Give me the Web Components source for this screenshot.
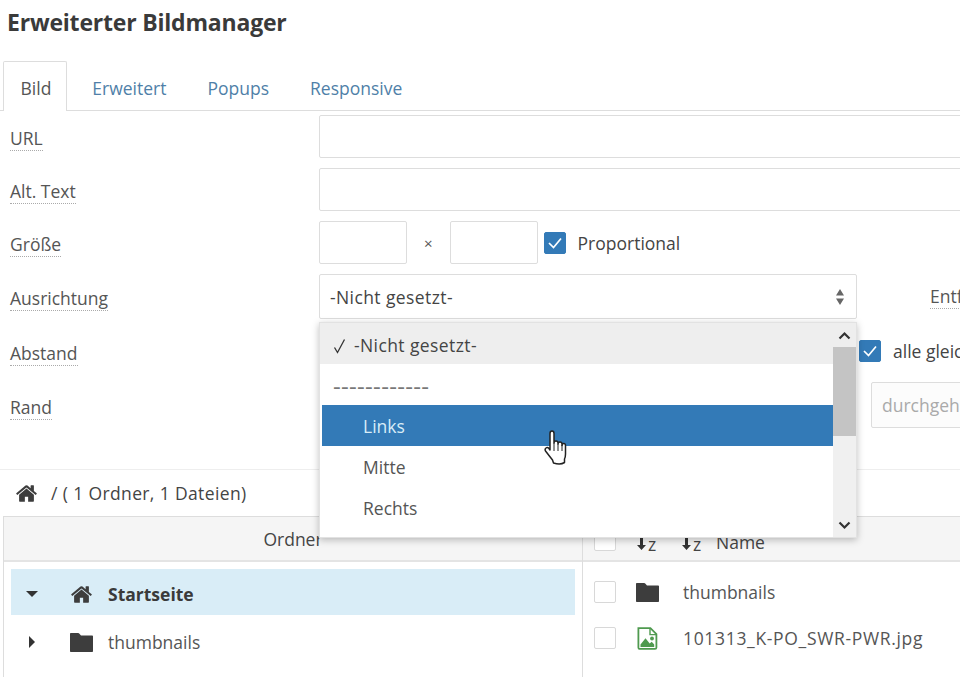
<!DOCTYPE html>
<html lang="de">
<head>
<meta charset="utf-8">
<title>Erweiterter Bildmanager</title>
<style>
  html, body { margin: 0; height: 100%; overflow: hidden; background: #fff; }
  body { font: 17.5px/24px "Open Sans", sans-serif; color: #444; width: 960px; height: 677px; position: relative; }
</style>
</head>
<body>
<bm-manager></bm-manager>

<script>
const ICONS = {
  home: `<svg viewBox="0 0 1792 1792" width="100%" height="100%"><path fill="currentColor" d="M1472 992v480q0 26-19 45t-45 19h-384v-384h-256v384h-384q-26 0-45-19t-19-45v-480q0-1 .5-3t.5-3l575-474 575 474q1 2 1 6zm223-69l-62 74q-8 9-21 11h-3q-13 0-21-7l-692-577-692 577q-12 8-24 7-13-2-21-11l-62-74q-8-10-7-23.5t11-21.5l719-599q32-26 76-26t76 26l244 204v-195q0-14 9-23t23-9h192q14 0 23 9t9 23v408l219 182q10 8 11 21.5t-7 23.5z"/></svg>`,
  folder: `<svg viewBox="0 0 23 20" width="100%" height="100%"><path fill="currentColor" d="M0 1.2Q0 .4.8.4h7.4q.6 0 1 .5L11 3h11.2q.8 0 .8.8v15q0 .8-.8.8H.8q-.8 0-.8-.8z"/></svg>`,
  image: `<svg viewBox="0 0 21 23" width="100%" height="100%"><path fill="none" stroke="#4f9a4f" stroke-width="1.8" d="M1.4 1.2h12l6 6v13.2q0 1.4-1.4 1.4H2.400q-1 0-1-1.4z"/><path fill="none" stroke="#4f9a4f" stroke-width="1.4" d="M13 1.2v6.400h6.400"/><circle cx="15" cy="11.500" r="1.900" fill="#4f9a4f"/><path fill="#4f9a4f" d="M3.500 20v-2.400l5-6.400 4.200 5.200 2-1.600 2.500 2.600V20z"/></svg>`
};

class BmTitle extends HTMLElement {
  constructor() {
    super();
    this.attachShadow({ mode: 'open' }).innerHTML = `
      <style>
        :host { display: block; padding: 7px 0 0 7px; height: 53px; box-sizing: border-box;
          font: bold 23px/30px "Open Sans", sans-serif; color: #3a3a3a; letter-spacing: -.2px; }
      </style><slot></slot>`;
  }
}

class BmTabs extends HTMLElement {
  constructor() {
    super();
    this.attachShadow({ mode: 'open' }).innerHTML = `
      <style>
        :host { display: flex; gap: 6px; height: 50px; box-sizing: border-box; padding-left: 3px;
          border-bottom: 1px solid #ddd; margin-top: 8px; }
      </style><slot></slot>`;
  }
}

class BmTab extends HTMLElement {
  constructor() {
    super();
    this.attachShadow({ mode: 'open' }).innerHTML = `
      <style>
        :host { display: block; height: 50px; box-sizing: border-box; padding: 14px 16.5px 0; border: 1px solid transparent;
          border-bottom: 0; line-height: 24px; color: #4f7fa8; }
        :host([active]) { border-color: #ddd; background: #fff; color: #555; border-radius: 2px 2px 0 0;
          padding-right: 14.5px; margin-right: 2px; }
      </style><slot></slot>`;
  }
}

class BmRow extends HTMLElement {
  constructor() {
    super();
    this.attachShadow({ mode: 'open' }).innerHTML = `
      <style>
        :host { display: flex; align-items: center; padding-left: 10px; min-height: 43px; margin-bottom: 10px; }
        .label { width: 309px; flex: none; padding-top: var(--label-drop, 2px); }
        .label span { border-bottom: 1px dotted #aaa; color: #555; }
        .field { display: flex; align-items: center; flex: 1; min-width: 0; }
      </style>
      <div class="label"><span><slot name="label"></slot></span></div>
      <div class="field"><slot></slot></div>`;
  }
}

class BmInput extends HTMLElement {
  constructor() {
    super();
    this.attachShadow({ mode: 'open' }).innerHTML = `
      <style>
        :host { display: flex; align-items: center; box-sizing: border-box; height: 43px; flex: none;
          border: 1px solid #ddd; border-radius: 2px; background: #fff; padding: 0 10px; color: #aaa; }
        :host([wide]) { width: 700px; }
        :host([small]) { width: 88px; }
      </style><slot></slot>`;
  }
}

class BmSelect extends HTMLElement {
  constructor() {
    super();
    this.attachShadow({ mode: 'open' }).innerHTML = `
      <style>
        :host { display: flex; align-items: center; justify-content: space-between; box-sizing: border-box;
          width: 538px; height: 45px; flex: none; padding: 0 12px 0 10px; border: 1px solid #ddd; border-radius: 2px; color: #444; letter-spacing: .4px; }
        svg { width: 8px; height: 16px; color: #666; }
      </style>
      <slot></slot>
      <svg viewBox="0 0 8 16"><path fill="currentColor" d="M4 0l4 6.500H0zM0 9.500h8L4 16z"/></svg>`;
  }
}

class BmCheck extends HTMLElement {
  constructor() {
    super();
    this.attachShadow({ mode: 'open' }).innerHTML = `
      <style>
        :host { display: inline-flex; align-items: center; gap: 12px; flex: none; }
        .box { box-sizing: border-box; width: 22px; height: 22px; border-radius: 2px; border: 1px solid #d8d8d8; background: #fff; display: block; }
        :host([checked]) .box { background: #337ab7; border-color: #337ab7; }
        svg { display: none; width: 20px; height: 20px; }
        :host([checked]) svg { display: block; }
      </style>
      <span class="box"><svg viewBox="0 0 20 20"><path fill="none" stroke="#fff" stroke-width="1.7" d="M4 10l4.500 4.500L16 5.500"/></svg></span>
      <slot></slot>`;
  }
}

class BmIcon extends HTMLElement {
  constructor() {
    super();
    this.attachShadow({ mode: 'open' });
  }
  connectedCallback() {
    this.shadowRoot.innerHTML = `
      <style>:host { display: block; flex: none; width: 23px; height: 23px; color: #3d3d3d; }</style>
      ${ICONS[this.getAttribute('name')]}`;
  }
}

class BmDropdown extends HTMLElement {
  constructor() {
    super();
    this.attachShadow({ mode: 'open' }).innerHTML = `
      <style>
        :host { position: absolute; left: 319px; top: 322px; width: 538px; height: 216px; box-sizing: border-box; display: flex;
          background: #fff; border: 1px solid #e2e2e2; box-shadow: 0 2px 7px rgba(0,0,0,.25); z-index: 5; }
        .list { flex: 1; min-width: 0; }
        .bar { width: 23px; flex: none; background: #f0f0f0; display: flex; flex-direction: column; }
        .btn { height: 24px; flex: none; display: flex; align-items: center; justify-content: center; }
        .btn svg { width: 13px; height: 9px; }
        .thumb { height: 89px; flex: none; background: #c4c4c4; }
        .rest { flex: 1; }
        .bar .btn.up { background: #eee; }
      </style>
      <div class="list"><slot></slot></div>
      <div class="bar">
        <div class="btn up"><svg viewBox="0 0 13 9"><path fill="none" stroke="#333" stroke-width="2.200" d="M1.500 7.500 6.500 2.500l5 5"/></svg></div>
        <div class="thumb"></div>
        <div class="rest"></div>
        <div class="btn"><svg viewBox="0 0 13 9"><path fill="none" stroke="#333" stroke-width="2.200" d="M1.500 1.500 6.500 6.500l5-5"/></svg></div>
      </div>`;
  }
}

class BmOption extends HTMLElement {
  constructor() {
    super();
    this.attachShadow({ mode: 'open' }).innerHTML = `
      <style>
        :host { display: flex; align-items: center; height: 41px; box-sizing: border-box; padding: 1px 0 0 41px; margin-left: 2px; color: #555; }
        :host([selected]) { background: #eee; margin-left: 0; padding: 3px 0 0 13px; color: #444; letter-spacing: .4px; }
        :host([divider]) { padding: 3px 0 0 11px; color: #777; font-size: 24px; letter-spacing: .3px; }
        :host([hover]) { background: #337ab7; color: #d9edf7; }
        svg { display: none; width: 13px; height: 16px; margin: 2px 8px 0 0; }
        :host([selected]) svg { display: block; }
      </style>
      <svg viewBox="0 0 13 16"><path fill="none" stroke="#333" stroke-width="1.300" d="M1.500 9.500 4.500 14.500 11.500 1.500"/></svg>
      <slot></slot>`;
  }
}

class BmCursor extends HTMLElement {
  constructor() {
    super();
    this.attachShadow({ mode: 'open' }).innerHTML = `
      <style>:host { position: absolute; left: 542px; top: 430px; width: 26px; height: 36px; z-index: 6; }</style>
      <svg viewBox="0 0 26 36" width="26" height="36">
        <path fill="#fff" stroke="#222" stroke-width="1.500" stroke-linejoin="round" d="M8 3.500q0-2.500 2-2.500t2 2.500V13q0-2 2-2t2 2v1q0-2 2-2t2 2v1.500q0-2 1.800-2t1.700 2.500V24q0 3-1 5v3.500q-4 2.500-11 .5l-1-3-7-9q-1-2 .5-3 1.500-1 3 .5L8 20z"/>
        <path fill="none" stroke="#222" stroke-width="1" d="M12 13v8M16 14v7M20 15v6"/>
      </svg>`;
  }
}

class BmCrumb extends HTMLElement {
  constructor() {
    super();
    this.attachShadow({ mode: 'open' }).innerHTML = `
      <style>
        :host { display: flex; align-items: center; gap: 13px; height: 47px; padding-left: 15px; border-top: 1px solid #eee; box-sizing: border-box; letter-spacing: .37px; }
      </style>
      <bm-icon name="home"></bm-icon><span><slot></slot></span>`;
  }
}

class BmBrowser extends HTMLElement {
  constructor() {
    super();
    this.attachShadow({ mode: 'open' }).innerHTML = `
      <style>
        :host { display: grid; grid-template-columns: 579px 1fr; margin-left: 3px; border-top: 1px solid #ddd; border-left: 1px solid #ddd; height: 170px; }
        .head { height: 43px; background: #f5f5f5; border-bottom: 2px solid #e4e4e4; display: flex; align-items: center; }
        .tree { border-right: 1px solid #ddd; }
        .tree .head { justify-content: center; }
        .body { padding: 7px 7px 0 7px; }
        .files .head { padding-left: 11px; }
        .files .body { padding: 7px 0 0 11px; }
      </style>
      <div class="tree">
        <div class="head"><slot name="tree-head"></slot></div>
        <div class="body"><slot name="tree"></slot></div>
      </div>
      <div class="files">
        <div class="head"><slot name="files-head"></slot></div>
        <div class="body"><slot name="files"></slot></div>
      </div>`;
  }
}

class BmTreeRow extends HTMLElement {
  constructor() {
    super();
    this.attachShadow({ mode: 'open' }).innerHTML = `
      <style>
        :host { display: flex; align-items: center; height: 46px; box-sizing: border-box; padding-top: 4px; color: #555; margin-top: 2px; }
        :host([open]) { background: #d9edf7; font-weight: 700; color: #3a3a3a; margin-top: 0; }
        .arrow { width: 43px; padding-left: 15px; box-sizing: border-box; flex: none; display: flex; }
        .arrow svg { display: block; width: 12px; height: 12px; }
        bm-icon { margin: 0 15px 0 16px; }
      </style>
      <span class="arrow"><svg viewBox="0 0 12 12"><path fill="#333" d="${this.hasAttribute('open') ? 'M0 3h12L6 9z' : 'M3 0l6 6-6 6z'}"/></svg></span>
      <bm-icon name="${this.getAttribute('icon')}"></bm-icon>
      <span><slot></slot></span>`;
  }
}

class BmFileRow extends HTMLElement {
  constructor() {
    super();
    this.attachShadow({ mode: 'open' }).innerHTML = `
      <style>
        :host { display: flex; align-items: center; height: 46px; color: #555; }
        bm-check { margin-right: 20px; }
        bm-icon { margin-right: 24px; }
      </style>
      <bm-check></bm-check>
      <bm-icon name="${this.getAttribute('icon')}"></bm-icon>
      <span><slot></slot></span>`;
  }
}

class BmSort extends HTMLElement {
  constructor() {
    super();
    this.attachShadow({ mode: 'open' }).innerHTML = `
      <style>
        :host { display: inline-flex; align-items: center; width: 44px; flex: none; color: #444; margin: 10px 0 0 1px; }
        svg { width: 9px; height: 12px; margin-right: 2px; }
      </style>
      <svg viewBox="0 0 9 12"><path fill="#333" d="M3 0h3v7h3l-4.500 5L0 7h3z"/></svg><slot></slot>`;
  }
}

class BmManager extends HTMLElement {
  constructor() {
    super();
    this.attachShadow({ mode: 'open' }).innerHTML = `
      <style>
        :host { display: block; }
        .form { padding-top: 4px; height: 358px; box-sizing: border-box; }
        .spacer { flex: none; }
        .gap { margin: 0 17px; color: #555; font-size: 15px; }
        .entf { margin-left: 73px; white-space: nowrap; border-bottom: 1px dotted #aaa; color: #555; }
        .prop { margin-left: 6px; }
        .low { --label-drop: 4px; }
        .muted { color: #aaa; }
        .name { margin: 6px 0 0 -10px; }
        .checkHead { margin: 2px 20px 0 0; }
        .longname { letter-spacing: .67px; }
      </style>
      <bm-title>Erweiterter Bildmanager</bm-title>
      <bm-tabs>
        <bm-tab active>Bild</bm-tab>
        <bm-tab>Erweitert</bm-tab>
        <bm-tab>Popups</bm-tab>
        <bm-tab>Responsive</bm-tab>
      </bm-tabs>
      <div class="form">
        <bm-row><span slot="label">URL</span><bm-input wide></bm-input></bm-row>
        <bm-row><span slot="label">Alt. Text</span><bm-input wide></bm-input></bm-row>
        <bm-row>
          <span slot="label">Größe</span>
          <bm-input small></bm-input><span class="gap">×</span><bm-input small></bm-input>
          <bm-check class="prop" checked>Proportional</bm-check>
        </bm-row>
        <bm-row>
          <span slot="label">Ausrichtung</span>
          <bm-select>-Nicht gesetzt-</bm-select><span class="entf">Entfernung</span>
        </bm-row>
        <bm-row class="low">
          <span slot="label">Abstand</span>
          <span class="spacer" style="width:540px"></span>
          <bm-check checked>alle gleich</bm-check>
        </bm-row>
        <bm-row class="low">
          <span slot="label">Rand</span>
          <span class="spacer" style="width:552px"></span>
          <bm-input class="muted" style="width:200px;height:46px;background:#fcfcfc">durchgehend</bm-input>
        </bm-row>
      </div>
      <bm-crumb>/ ( 1 Ordner, 1 Dateien)</bm-crumb>
      <bm-browser>
        <span slot="tree-head">Ordner</span>
        <bm-tree-row slot="tree" open icon="home">Startseite</bm-tree-row>
        <bm-tree-row slot="tree" icon="folder">thumbnails</bm-tree-row>
        <bm-check slot="files-head" class="checkHead"></bm-check>
        <bm-sort slot="files-head">z</bm-sort>
        <bm-sort slot="files-head">z</bm-sort>
        <span slot="files-head" class="name">Name</span>
        <bm-file-row slot="files" icon="folder">thumbnails</bm-file-row>
        <bm-file-row slot="files" icon="image"><span class="longname">101313_K-PO_SWR-PWR.jpg</span></bm-file-row>
      </bm-browser>
      <bm-dropdown>
        <bm-option selected>-Nicht gesetzt-</bm-option>
        <bm-option divider>------------</bm-option>
        <bm-option hover>Links</bm-option>
        <bm-option>Mitte</bm-option>
        <bm-option>Rechts</bm-option>
      </bm-dropdown>
      <bm-cursor></bm-cursor>`;
  }
}

customElements.define('bm-title', BmTitle);
customElements.define('bm-tabs', BmTabs);
customElements.define('bm-tab', BmTab);
customElements.define('bm-row', BmRow);
customElements.define('bm-input', BmInput);
customElements.define('bm-select', BmSelect);
customElements.define('bm-check', BmCheck);
customElements.define('bm-icon', BmIcon);
customElements.define('bm-dropdown', BmDropdown);
customElements.define('bm-option', BmOption);
customElements.define('bm-cursor', BmCursor);
customElements.define('bm-crumb', BmCrumb);
customElements.define('bm-browser', BmBrowser);
customElements.define('bm-tree-row', BmTreeRow);
customElements.define('bm-file-row', BmFileRow);
customElements.define('bm-sort', BmSort);
customElements.define('bm-manager', BmManager);
</script>
</body>
</html>
